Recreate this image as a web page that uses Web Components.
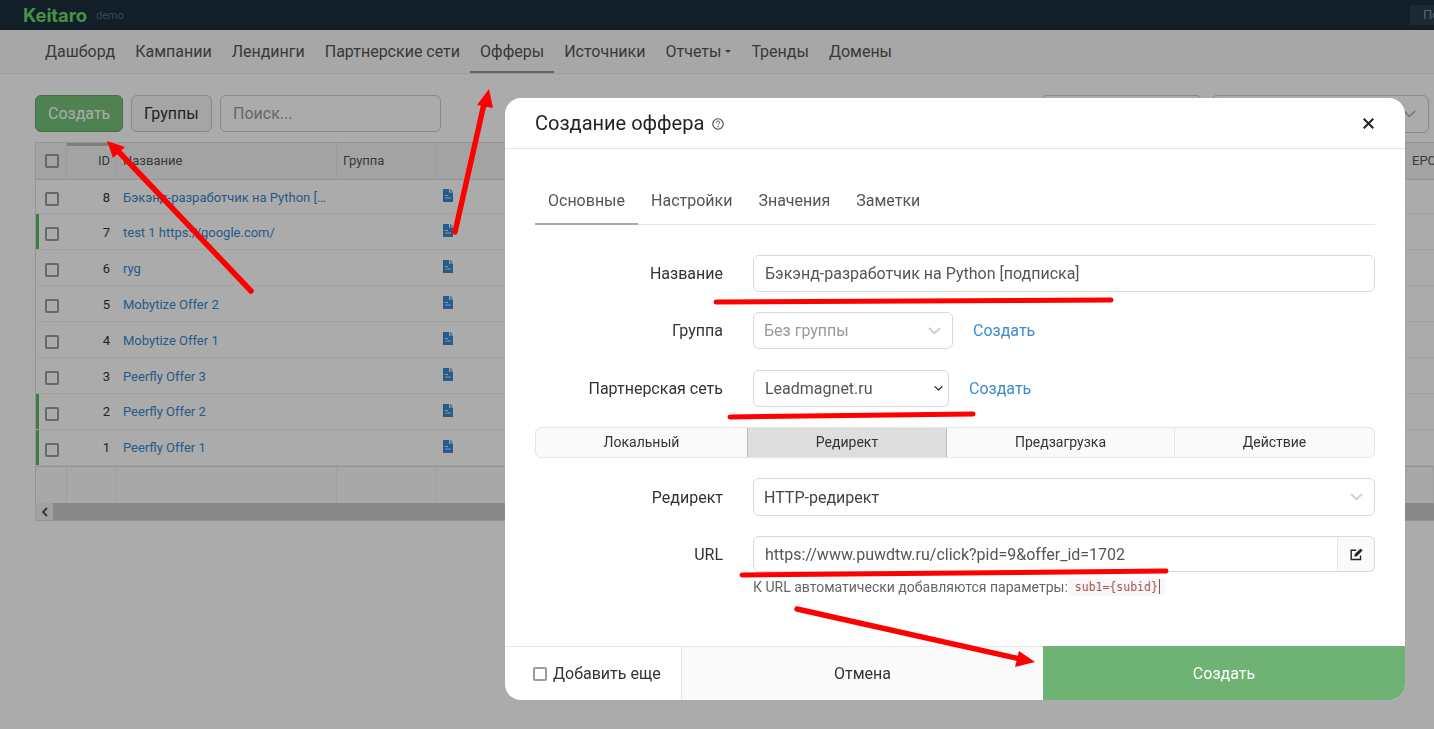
<!DOCTYPE html>
<html lang="ru">
<head>
<meta charset="utf-8">
<title>Keitaro</title>
<style>
  html, body { margin: 0; height: 100%; background: #fff; overflow: hidden; }
  body { font-family: Roboto, "Liberation Sans", sans-serif; color: #333; --cols: 31px 50px 220px 100px 969px 28px; }
</style>
</head>
<body>
<k-topbar></k-topbar>
<k-nav>
  <k-nav-item>Дашборд</k-nav-item>
  <k-nav-item>Кампании</k-nav-item>
  <k-nav-item>Лендинги</k-nav-item>
  <k-nav-item>Партнерские сети</k-nav-item>
  <k-nav-item active>Офферы</k-nav-item>
  <k-nav-item>Источники</k-nav-item>
  <k-nav-item caret>Отчеты</k-nav-item>
  <k-nav-item>Тренды</k-nav-item>
  <k-nav-item>Домены</k-nav-item>
</k-nav>
<k-toolbar></k-toolbar>
<k-offers>
  <k-offer-row num="8" name="Бэкэнд-разработчик на Python […"></k-offer-row>
  <k-offer-row num="7" name="test 1 https://google.com/" live></k-offer-row>
  <k-offer-row num="6" name="ryg"></k-offer-row>
  <k-offer-row num="5" name="Mobytize Offer 2"></k-offer-row>
  <k-offer-row num="4" name="Mobytize Offer 1"></k-offer-row>
  <k-offer-row num="3" name="Peerfly Offer 3"></k-offer-row>
  <k-offer-row num="2" name="Peerfly Offer 2" live></k-offer-row>
  <k-offer-row num="1" name="Peerfly Offer 1" live></k-offer-row>
</k-offers>
<k-backdrop></k-backdrop>
<k-offer-modal></k-offer-modal>
<k-annotations></k-annotations>

<script>
// small helper: every element just sets its shadow html once
class Base extends HTMLElement {
  connectedCallback() {
    if (!this.shadowRoot) this.attachShadow({ mode: 'open' }).innerHTML = this.html();
  }
}

const chevron = (w, color, sw) => `<svg width="${w}" height="${Math.round(w * 0.6)}" viewBox="0 0 14 8" fill="none" stroke="${color}" stroke-width="${sw}" stroke-linecap="round" stroke-linejoin="round"><path d="M1.5 1.2 7 6.5l5.5-5.3"/></svg>`;

class KTopbar extends Base {
  html() { return `
    <style>
      :host { display: flex; align-items: center; height: 30px; background: #1b2f3c; padding-left: 23px; overflow: hidden; }
      .logo { font: 700 18.5px/30px Inter, sans-serif; color: #68d86a; letter-spacing: -.1px; margin-top: -1px; }
      .demo { font: 11px Roboto, sans-serif; color: #4a6f8c; margin-left: 9px; }
      .user { margin-left: auto; width: 11px; height: 20px; padding-left: 13px; background: #2a3d4c; font: 13px/20px Roboto, sans-serif; color: #8a96a0; white-space: nowrap; overflow: hidden; }
    </style>
    <span class="logo">Keitaro</span><span class="demo">demo</span><span class="user">По</span>`; }
}

class KNav extends Base {
  html() { return `
    <style>
      :host { display: flex; height: 43px; padding-left: 35px; background: #f9f9f9; border-bottom: 1px solid #e6e6e6; }
    </style>
    <slot></slot>`; }
}

class KNavItem extends Base {
  html() {
    const caret = this.hasAttribute('caret') ? '<i></i>' : '';
    return `
    <style>
      :host { display: flex; align-items: center; padding: 0 10px; font-size: 16px; color: #555; box-sizing: border-box; }
      :host([active]) { box-shadow: inset 0 -2px 0 #999; }
      i { width: 0; height: 0; border: 3.5px solid transparent; border-top-color: #555; border-bottom: 0; margin-left: 4px; }
    </style>
    <slot></slot>${caret}`; }
}

class KToolbar extends Base {
  html() { return `
    <style>
      :host { display: flex; gap: 8px; padding: 21px 0 0 35px; height: 47px; width: 1394px; box-sizing: content-box; font-size: 16px; }
      div { box-sizing: border-box; height: 37px; line-height: 35px; border: 1px solid #ccc; border-radius: 6px; padding: 0 12px; color: #333; }
      .add { width: 88px; background: #76c27a; border-color: #6aa86e; color: #fff; }
      .groups { width: 81px; background: #f7f7f7; }
      .search { width: 221px; color: #999; }
      .f1 { width: 161px; height: 38px; margin-left: auto; }
      .f2 { width: 218px; height: 38px; margin-left: 1px; display: flex; align-items: center; justify-content: flex-end; }
    </style>
    <div class="add">Создать</div>
    <div class="groups">Группы</div>
    <div class="search">Поиск...</div>
    <div class="f1"></div>
    <div class="f2">${chevron(13, '#bbb', 2)}</div>`; }
}

class KOffers extends Base {
  html() { return `
    <style>
      :host { display: block; margin: 0 0 0 35px; width: 1398px; border-left: 1px solid #ddd; border-bottom: 1px solid #ddd; font-size: 13px; overflow: hidden; }
      .row { display: grid; grid-template-columns: var(--cols); }
      .head { height: 36px; background: #f4f4f4; border-top: 1px solid #ddd; border-bottom: 1px solid #ddd; color: #555; font-size: 13px; line-height: 36px; }
      .head > span { border-right: 1px solid #e8e8e8; padding-left: 6px; box-sizing: border-box; position: relative; white-space: nowrap; }
      .head > span:last-child { border: 0; }
      .head .id { text-align: right; padding: 0 6px 0 0; }
      .id::before { content: ""; position: absolute; left: 0; top: 0; width: 41px; height: 3px; background: #bcbcbc; }
      .box { width: 10px; height: 10px; border: 2px solid #9a9aa8; border-radius: 2px; display: block; margin: 11px 0 0 3px; }
      .foot { height: 36px; background: #fbfbfb; border-top: 1px solid #ddd; }
      .foot > span { border-right: 1px solid #eee; }
      .scroll { display: flex; height: 17px; background: #cbcbcb; }
      .scroll b { width: 17px; background: #f1f1f1; display: flex; align-items: center; justify-content: center; }
    </style>
    <div class="row head">
      <span><i class="box"></i></span><span class="id">ID</span><span>Название</span><span>Группа</span><span></span><span>EPC</span>
    </div>
    <slot></slot>
    <div class="row foot"><span></span><span></span><span></span><span></span><span></span><span></span></div>
    <div class="scroll"><b><svg width="8" height="10" viewBox="0 0 8 10" fill="none" stroke="#555" stroke-width="2"><path d="M6 1 2 5l4 4"/></svg></b></div>`; }
}

class KOfferRow extends Base {
  html() {
    const num = this.getAttribute('num');
    return `
    <style>
      :host { display: grid; grid-template-columns: var(--cols); height: 36px; box-sizing: border-box; border-bottom: 1px solid #f2f2f2; align-items: center; background: #fff; font-size: 13px; }
      :host(:first-child) { height: 34px; }
      :host([live]) { box-shadow: inset 3px 0 0 #58bd5e; }
      .box { width: 10px; height: 10px; border: 2px solid #9a9aa8; border-radius: 2px; display: block; margin: 4px 0 0 9px; }
      .id { text-align: right; padding: 2px 7px 0 0; color: #333; }
      a { padding: 2px 0 0 6px; color: #3b88cc; white-space: nowrap; }
      :host(:nth-last-child(-n+2)) .id, :host(:nth-last-child(-n+2)) a { padding-top: 0; }
      svg { display: block; margin: -3px 0 0 6px; }
    </style>
    <span><i class="box"></i></span>
    <span class="id">${num}</span>
    <a>${this.getAttribute('name')}</a>
    <span></span>
    <span><svg width="10" height="13" viewBox="0 0 10 13"><path fill="#3b88cc" d="M0 0h6v3.5h4V13H0z"/><path fill="#3b88cc" d="M7 0l3 2.6H7z"/><path stroke="#cfe2f2" stroke-width="1" d="M2 6.5h3M2 9h6"/></svg></span>`; }
}

class KBackdrop extends Base {
  html() { return `<style>:host { position: fixed; inset: 0; background: rgba(0,0,0,.33); }</style>`; }
}

class KField extends Base {
  html() { return `
    <style>
      :host { display: flex; align-items: center; height: 37px; font-size: 16px; }
      label { width: 188px; text-align: right; margin-right: 30px; color: #333; flex: none; }
      .ctl { flex: 1; display: flex; align-items: center; min-width: 0; height: 100%; }
    </style>
    <label>${this.getAttribute('label')}</label>
    <div class="ctl"><slot></slot></div>`; }
}

class KControl extends Base {
  html() {
    const type = this.getAttribute('chev');
    const icon = type === 'native' ? chevron(9, '#333', 2) : type ? chevron(13, '#ccc', 2) : '';
    return `
    <style>
      :host { display: flex; align-items: center; justify-content: space-between; box-sizing: border-box; height: 100%; border: 1px solid #d5d8de; border-radius: 6px; padding: 0 11px; font-size: 16px; color: #555; background: #fff; flex: 1; }
      :host([muted]) { color: #999; padding-left: 10px; }
      :host([dark]) { color: #444; padding-left: 10px; }
      :host([attached]) { border-radius: 6px 0 0 6px; }
      :host([chev="native"]) { padding-right: 5px; }
    </style>
    <span><slot></slot></span>${icon}`; }
}

class KSegment extends Base {
  html() { return `
    <style>
      :host { display: grid; grid-template-columns: 211px 200px 227px 1fr; height: 31px; box-sizing: border-box; border: 1px solid #e6e6e6; border-radius: 6px; background: #fafafa; font-size: 14px; color: #333; overflow: hidden; margin-top: 20px; }
      span { display: flex; align-items: center; justify-content: center; padding-bottom: 1px; }
      .on { background: #dedede; border-left: 1px solid #bbb; border-right: 1px solid #bbb; }
      .last { border-left: 1px solid #e6e6e6; }
    </style>
    <span>Локальный</span><span class="on">Редирект</span><span>Предзагрузка</span><span class="last">Действие</span>`; }
}

class KOfferModal extends Base {
  html() { return `
    <style>
      :host { position: absolute; left: 505px; top: 98px; width: 900px; height: 602px; display: flex; flex-direction: column; background: #fff; border-radius: 16px; overflow: hidden; }
      header { display: flex; align-items: center; height: 50px; border-bottom: 1px solid #e6e6e6; padding: 0 30px; flex: none; }
      h2 { margin: 0; font: 400 20px Roboto, sans-serif; color: #212529; }
      .help { margin-left: 8px; margin-top: 1px; }
      .close { margin-left: auto; margin-right: 1px; margin-top: 1px; }
      main { flex: 1; padding: 31px 30px 0; display: flex; flex-direction: column; }
      nav { display: flex; height: 44px; border-bottom: 1px solid #e6e6e6; flex: none; margin-bottom: 30px; }
      nav span { padding: 0 13px; line-height: 41px; font-size: 16px; color: #555; }
      nav .on { box-shadow: 0 1px 0 #aaa, inset 0 -1px 0 #aaa; }
      k-field + k-field { margin-top: 20px; }
      k-segment + k-field { margin-top: 20px; }
      .link { color: #3b8bd0; font-size: 16px; margin-left: 20px; }
      .addon { width: 38px; height: 36px; box-sizing: border-box; border: 1px solid #d5d8de; border-left: 1px solid #e6e6e6; border-radius: 0 6px 6px 0; background: #fafafa; display: flex; align-items: center; justify-content: center; flex: none; margin-left: -1px; }
      .hint { margin: 5px 0 0 218px; font-size: 14px; color: #666; display: flex; align-items: center; height: 20px; }
      code { font: 11.5px "DejaVu Sans Mono", monospace; color: #a55; background: #f7f7f7; padding: 2px 7px; border-radius: 3px; height: 14px; line-height: 14px; position: relative; }
      code::after { content: ""; position: absolute; right: 5px; top: 1px; width: 1px; height: 15px; background: #a04848; }
      footer { display: flex; height: 54px; border-top: 1px solid #e6e6e6; box-sizing: border-box; flex: none; }
      .more { width: 177px; box-sizing: border-box; border-right: 1px solid #e6e6e6; display: flex; align-items: center; padding-left: 29px; font-size: 16px; color: #333; }
      .more i { width: 10px; height: 10px; border: 2px solid #9a9aa8; border-radius: 2px; margin-right: 6px; margin-left: -1px; }
      .cancel { width: 361px; background: #fafafa; display: flex; align-items: center; justify-content: center; font-size: 16px; color: #333; }
      .ok { flex: 1; background: #6eb274; margin-top: -1px; display: flex; align-items: center; justify-content: center; font-size: 16px; color: #fff; }
    </style>
    <header>
      <h2>Создание оффера</h2>
      <svg class="help" width="12" height="12" viewBox="0 0 11 11" fill="none"><circle cx="5.5" cy="5.5" r="4.8" stroke="#444"/><path d="M3.9 4.3c.1-1 .8-1.5 1.6-1.5.9 0 1.6.6 1.6 1.3 0 1.1-1.5 1.1-1.5 2.4" stroke="#444" stroke-width=".9"/><circle cx="5.6" cy="8" r=".6" fill="#444"/></svg>
      <svg class="close" width="11" height="11" viewBox="0 0 11 11" stroke="#222" stroke-width="2"><path d="M.7.7l9.6 9.6M10.300.7.7 10.300"/></svg>
    </header>
    <main>
      <nav><span class="on">Основные</span><span>Настройки</span><span>Значения</span><span>Заметки</span></nav>
      <k-field label="Название"><k-control>Бэкэнд-разработчик на Python [подписка]</k-control></k-field>
      <k-field label="Группа"><k-control muted chev="soft" style="flex:none;width:200px">Без группы</k-control><span class="link">Создать</span></k-field>
      <k-field label="Партнерская сеть" style="margin-top:21px"><k-control chev="native" style="flex:none;width:196px">Leadmagnet.ru</k-control><span class="link">Создать</span></k-field>
      <k-segment></k-segment>
      <k-field label="Редирект" style="height:38px"><k-control dark chev="soft">HTTP-редирект</k-control></k-field>
      <k-field label="URL" style="height:36px"><k-control attached>https://www.puwdtw.ru/click?pid=9&amp;offer_id=1702</k-control>
        <span class="addon"><svg width="13" height="13" viewBox="0 0 13 13" fill="none" stroke="#222" stroke-width="1.400"><path d="M10.500 7.500v4H1.200V2.200h5"/><path d="M4.700 8.300l.4-2.300L10.600.9l1.600 1.700-5.300 5.300z" fill="#222" stroke-width=".6"/></svg></span></k-field>
      <div class="hint"><span>К URL автоматически добавляются параметры:</span><code>sub1={subid}</code></div>
    </main>
    <footer>
      <div class="more"><i></i>Добавить еще</div>
      <div class="cancel">Отмена</div>
      <div class="ok">Создать</div>
    </footer>`; }
}

// red marks drawn on top of the screenshot
class KAnnotations extends Base {
  html() { return `
    <style>
      :host { position: absolute; left: 0; top: 0; width: 1434px; height: 729px; pointer-events: none; }
      svg { display: block; }
    </style>
    <svg width="1434" height="729" viewBox="0 0 1434 729" fill="none" stroke="#f00" stroke-linecap="round">
      <path stroke-width="5.500" d="M251 291 118 151M455 232 484 104M797 609 1020 659"/>
      <path stroke-width="5" d="M716 302 1111 300M730 417 973 414M742 575 1166 571"/>
      <path fill="#f00" stroke="none" d="M107 141l18 6-12 11zM489 89l4 19-16-3zM1035 662l-16-11-4 16z"/>
    </svg>`; }
}

const defs = {
  'k-topbar': KTopbar, 'k-nav': KNav, 'k-nav-item': KNavItem, 'k-toolbar': KToolbar,
  'k-offers': KOffers, 'k-offer-row': KOfferRow, 'k-backdrop': KBackdrop, 'k-field': KField,
  'k-control': KControl, 'k-segment': KSegment, 'k-offer-modal': KOfferModal, 'k-annotations': KAnnotations
};
Object.keys(defs).forEach(n => customElements.define(n, defs[n]));
</script>
</body>
</html>
